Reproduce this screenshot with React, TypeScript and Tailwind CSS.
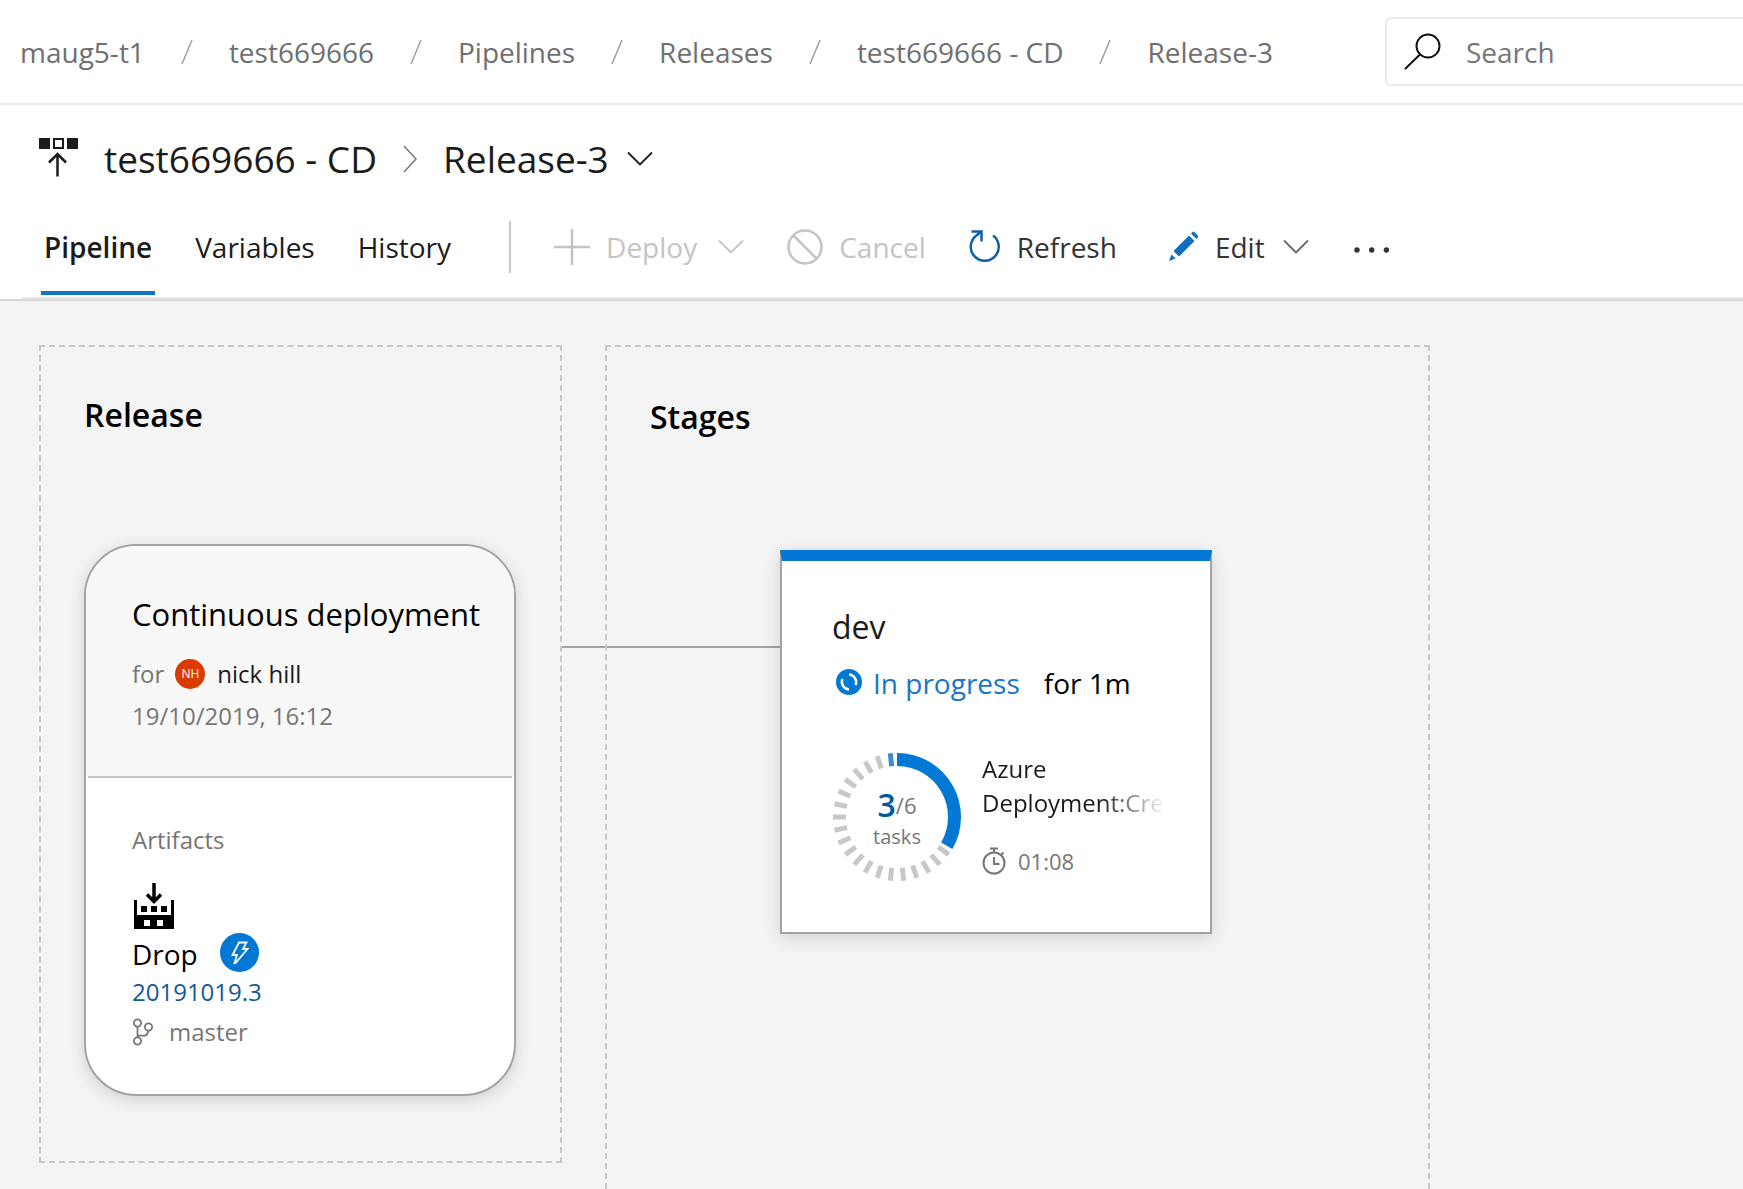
import React from "react";

const crumbs = ["maug5-t1", "test669666", "Pipelines", "Releases", "test669666 - CD", "Release-3"];

function ChevronDown({ className }: { className?: string }) {
  return (
    <svg width="26" height="16" viewBox="0 0 26 16" fill="none" stroke="currentColor" strokeWidth="1.800" className={className} aria-hidden="true">
      <path d="M1 1.500 13 13.500 25 1.500" />
    </svg>
  );
}

function SearchIcon() {
  return (
    <svg width="38" height="38" viewBox="0 0 38 38" fill="none" stroke="#111" strokeWidth="2" aria-hidden="true">
      <circle cx="24" cy="13" r="11.500" />
      <path d="M16 21.500 1.500 35.500" strokeLinecap="round" />
    </svg>
  );
}

function ReleaseIcon() {
  return (
    <svg width="40" height="44" viewBox="0 0 40 44" aria-hidden="true">
      <rect x="0" y="1" width="11" height="11" fill="#1b1b1b" />
      <rect x="28" y="1" width="11" height="11" fill="#1b1b1b" />
      <rect x="15" y="2" width="9" height="9" fill="none" stroke="#1b1b1b" strokeWidth="2" />
      <path d="M18.500 39.500V18M10 25.500 18.500 17 27 25.500" fill="none" stroke="#1b1b1b" strokeWidth="2.500" />
    </svg>
  );
}

function BuildIcon() {
  return (
    <svg width="42" height="46" viewBox="-1 0 42 46" aria-hidden="true">
      <path fill="#000" fillRule="evenodd" d="M1 17h3v15h34V17h3v29H1zM11 37h6v6h-6zM24 37h6v6h-6z" />
      <path fill="#000" d="M8 23h6v6H8zM18 23h6v6h-6zM28 23h6v6h-6z" />
      <path d="M21 0v18M14 11.500 21 18.500 28 11.500" fill="none" stroke="#000" strokeWidth="3.500" />
    </svg>
  );
}

function BranchIcon() {
  return (
    <svg width="22" height="28" viewBox="0 0 22 28" fill="none" stroke="#767676" strokeWidth="1.800" aria-hidden="true">
      <circle cx="5.500" cy="5" r="3.600" />
      <circle cx="5.500" cy="23" r="3.600" />
      <circle cx="16.500" cy="9" r="3.600" />
      <path d="M5.500 8.600v10.800M16.500 12.600l-1.500 4-2 1H6" />
    </svg>
  );
}

function StopwatchIcon() {
  return (
    <svg width="24" height="28" viewBox="0 0 24 28" fill="none" stroke="#767676" strokeWidth="2" aria-hidden="true">
      <circle cx="12" cy="16" r="10.500" />
      <path d="M8 1.500h8M12 2v4M18.500 8.500l3-3M12 10v7h5.500" />
    </svg>
  );
}

function ProgressRing() {
  const ticks = Array.from({ length: 20 }, (_, i) => 126 + i * 12);
  return (
    <svg width="130" height="130" viewBox="0 0 130 130" className="col-start-1 row-start-1" aria-hidden="true">
      <path d="M65 7.500A57.500 57.500 0 0 1 114.800 93.750" fill="none" stroke="#0078d4" strokeWidth="13" />
      {ticks.map((a) => (
        <path key={a} d="M65 1v13" stroke={a === 354 ? "#3d8ad2" : "#c8c8c8"} strokeWidth="5" transform={`rotate(${a} 65 65)`} />
      ))}
    </svg>
  );
}

function Header() {
  return (
    <header className="flex h-[105px] items-center overflow-hidden border-b-2 border-[#eaeaea] pl-5">
      <nav aria-label="Breadcrumb" className="flex-none">
        <ol className="flex items-center text-[28px] leading-9 text-[#6f6f6f]">
          {crumbs.map((c, i) => (
            <li key={c} className="flex items-center whitespace-nowrap">
              {i > 0 && (
                <svg width="12" height="26" viewBox="0 0 12 26" className="mx-9" fill="none" stroke="#a0a0a0" strokeWidth="1.500" aria-hidden="true">
                  <path d="M11 1 1 25" />
                </svg>
              )}
              <a href="#">{c}</a>
            </li>
          ))}
        </ol>
      </nav>
      <label className="ml-28 flex h-[69px] min-w-0 flex-1 items-center gap-6 rounded-l-md border-2 border-r-0 border-[#eaeaea] pl-[17px]">
        <SearchIcon />
        <input type="text" aria-label="Search" placeholder="Search" className="w-full min-w-0 flex-1 bg-transparent text-[28px] leading-9 outline-none placeholder:text-[#767676]" />
      </label>
    </header>
  );
}

function TitleRow() {
  return (
    <div className="flex h-[108px] items-center pl-[39px] text-[37px] leading-[48px] text-[#1b1b1b]">
      <ReleaseIcon />
      <a href="#" className="ml-[25px]">test669666 - CD</a>
      <svg width="14" height="28" viewBox="0 0 14 28" className="mx-[26px]" fill="none" stroke="#777" strokeWidth="1.500" aria-hidden="true">
        <path d="M1 1 13 14 1 27" />
      </svg>
      <button type="button" className="flex items-center gap-[18px]">
        <span>Release-3</span>
        <ChevronDown />
      </button>
    </div>
  );
}

function TabsAndActions() {
  return (
    <div className="flex h-[84px] items-start pl-[41px] text-[28px] leading-9 text-[#1b1b1b]">
      <nav className="flex gap-[37px]" aria-label="Views">
        <button type="button" className="h-[82px] border-b-4 border-[#1175c4] px-[3px] pb-[11px] font-semibold">Pipeline</button>
        <button type="button" className="h-[82px] border-b-4 border-transparent px-[3px] pb-[11px]">Variables</button>
        <button type="button" className="h-[82px] border-b-4 border-transparent px-[3px] pb-[11px]">History</button>
      </nav>
      <div className="flex h-[67px] items-center text-[#333]">
        <div className="ml-[55px] h-[52px] w-0.5 bg-[#c8c8c8]" />
        <button type="button" disabled className="ml-[43px] flex items-center text-[#c4c4c4]">
          <svg width="36" height="36" viewBox="0 0 36 36" stroke="currentColor" strokeWidth="2.500" aria-hidden="true">
            <path d="M18 0v36M0 18h36" />
          </svg>
          <span className="ml-4">Deploy</span>
          <ChevronDown className="ml-[21px]" />
        </button>
        <button type="button" disabled className="ml-[43px] flex items-center gap-4 text-[#c4c4c4]">
          <svg width="36" height="36" viewBox="0 0 36 36" fill="none" stroke="currentColor" strokeWidth="2.500" aria-hidden="true">
            <circle cx="18" cy="18" r="16.500" />
            <path d="M6.500 6.500 29.500 29.500" />
          </svg>
          <span>Cancel</span>
        </button>
        <button type="button" className="ml-[43px] flex items-center gap-4">
          <svg width="32" height="34" viewBox="0 0 32 34" fill="none" stroke="#0f5fa8" strokeWidth="2.500" aria-hidden="true">
            <path d="M24 5.500A14 14 0 1 1 7.500 5.500L11 2.500" />
            <path d="M2.500 1.500H12.500V11.500" />
          </svg>
          <span>Refresh</span>
        </button>
        <button type="button" className="ml-[52px] flex items-center">
          <svg width="30" height="32" viewBox="0 0 30 32" fill="#106ebe" aria-hidden="true">
            <path d="M4.500 20 20 4.500 25.500 10 10 25.500z" />
            <path d="M22 2.500 23.500 1c1.300-1.300 6.800 4.200 5.500 5.500L27.500 8z" />
            <path d="M2.500 23.500 6.500 27.500 0 30z" />
          </svg>
          <span className="ml-4">Edit</span>
          <ChevronDown className="ml-[18px] text-[#666]" />
        </button>
        <button type="button" aria-label="More actions" className="ml-[44px]">
          <svg width="38" height="8" viewBox="0 0 38 8" fill="#333" className="mt-1.5" aria-hidden="true">
            <circle cx="4" cy="4" r="2.700" />
            <circle cx="18.700" cy="4" r="2.700" />
            <circle cx="33.400" cy="4" r="2.700" />
          </svg>
        </button>
      </div>
    </div>
  );
}

function ReleaseCard() {
  return (
    <article className="mt-[109px] overflow-hidden rounded-[52px] border-2 border-[#a3a3a3] bg-white text-2xl leading-8 shadow-[0_4px_16px_rgba(0,0,0,0.15)]">
      <div className="bg-[#f8f8f8] pt-12 pb-11 pl-[46px]">
        <h3 className="text-[31px] leading-10 whitespace-nowrap text-black">Continuous deployment</h3>
        <div className="mt-6 flex items-center text-[#767676]">
          <span>for</span>
          <span className="mr-3 ml-[11px] flex size-[30px] items-center justify-center rounded-full bg-[#da3b01] text-[12px] leading-4 text-white">NH</span>
          <span className="text-[#1b1b1b]">nick hill</span>
        </div>
        <p className="mt-2.5 text-[#767676]">19/10/2019, 16:12</p>
      </div>
      <hr className="mx-0.5 border-t-2 border-[#c4c4c4]" />
      <div className="pt-[46px] pb-[46px] pl-[46px] text-[#767676]">
        <h4>Artifacts</h4>
        <div className="mt-[27px]">
          <BuildIcon />
        </div>
        <div className="mt-1 flex items-end gap-[22px]">
          <span className="text-[28px] leading-9 text-black">Drop</span>
          <svg width="39" height="39" viewBox="0 0 39 39" aria-hidden="true">
            <circle cx="19.500" cy="19.500" r="19.500" fill="#0078d4" />
            <path d="M19 9.500h7.500l-3.500 6.500h4.500L15.500 30h-1l2.500-8h-4.500z" fill="none" stroke="#fff" strokeWidth="1.800" />
          </svg>
        </div>
        <a href="#" className="mt-1 block text-[#0f5a9c]">20191019.3</a>
        <div className="mt-2 flex items-center gap-[15px]">
          <BranchIcon />
          <span>master</span>
        </div>
      </div>
    </article>
  );
}

function StageCard() {
  return (
    <article className="w-[432px] border-2 border-t-[11px] border-[#a3a3a3] border-t-[#0078d4] bg-white pt-[46px] pb-[50px] pl-[50px] text-[#1b1b1b] shadow-[0_4px_16px_rgba(0,0,0,0.15)]">
      <h3 className="text-[32px] leading-10">dev</h3>
      <div className="mt-4 flex items-center text-[28px] leading-10 text-black">
        <svg width="26" height="28" viewBox="0 0 26 28" className="ml-1" fill="none" stroke="#fff" strokeWidth="2.500" aria-hidden="true">
          <circle cx="13" cy="13" r="13" fill="#0078d4" stroke="none" />
          <path d="M13 5.500a7.500 7.500 0 0 1 6.500 10.500M13 20.500A7.500 7.500 0 0 1 6.500 10" />
        </svg>
        <a href="#" className="ml-[11px] text-[#1a75c9]">In progress</a>
        <span className="ml-6">for 1m</span>
      </div>
      <div className="mt-[49px] flex items-start">
        <div className="grid flex-none place-items-center">
          <ProgressRing />
          <div className="col-start-1 row-start-1 flex flex-col items-center text-[20px] leading-7 text-[#767676]">
            <div className="flex items-center pt-1">
              <strong className="text-[32px] leading-9 font-semibold text-[#005a9e]">3</strong>
              <span className="text-[22px]">/6</span>
            </div>
            <span>tasks</span>
          </div>
        </div>
        <div className="ml-5 w-[200px] text-2xl leading-[34px]">
          <p className="mask-[linear-gradient(to_right,#000_118px,transparent_184px)]">
            Azure
            <br />
            Deployment:Cre
          </p>
          <div className="mt-6 flex items-center gap-3 text-[22px] text-[#767676]">
            <StopwatchIcon />
            <span>01:08</span>
          </div>
        </div>
      </div>
    </article>
  );
}

export default function App() {
  return (
    <div className="flex min-h-screen flex-col overflow-hidden bg-white font-['Open_Sans',sans-serif]">
      <Header />
      <TitleRow />
      <TabsAndActions />
      <div className="ml-[22px] h-0.5 bg-[#e8e8e8]" />
      <div className="h-0.5 bg-[#d8d8d8]" />
      <main className="flex flex-1 bg-[#f4f4f4] pt-11 pl-[39px]">
        <section className="mb-[26px] w-[523px] flex-none self-start border-2 border-dashed border-[#c8c8c8] pr-11 pt-12 pb-[65px] pl-[43px]">
          <h2 className="text-[32px] leading-10 font-semibold text-black">Release</h2>
          <ReleaseCard />
        </section>
        <div className="mt-[301px] h-0.5 w-[43px] flex-none bg-[#a3a3a3]" />
        <section className="w-[825px] flex-none border-2 border-b-0 border-dashed border-[#c8c8c8] pt-[50px]">
          <h2 className="pl-[43px] text-[32px] leading-10 font-semibold text-black">Stages</h2>
          <div className="mt-[113px] flex items-start">
            <div className="mt-24 h-0.5 w-[173px] bg-[#a3a3a3]" />
            <StageCard />
          </div>
        </section>
      </main>
    </div>
  );
}
